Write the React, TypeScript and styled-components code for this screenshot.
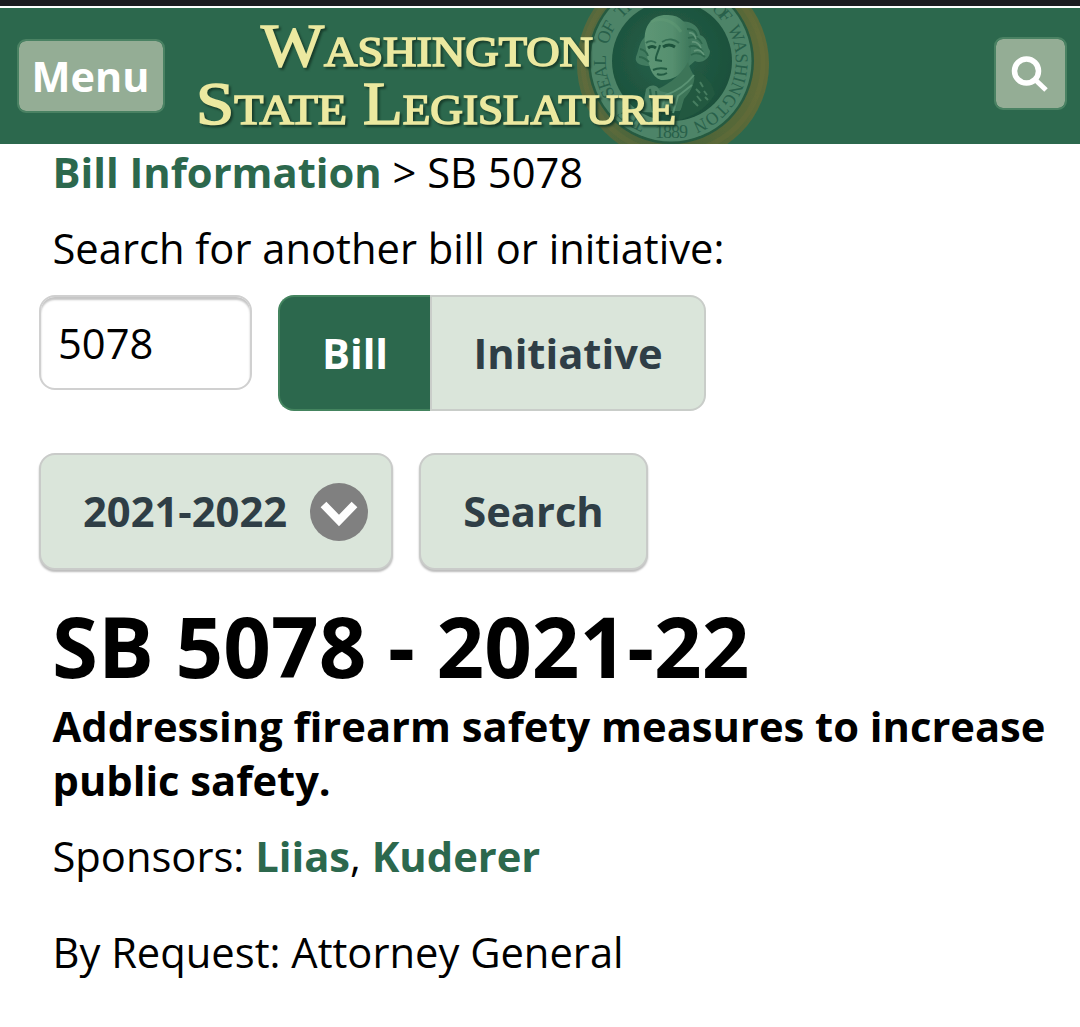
import React from "react";
import styled, { createGlobalStyle } from "styled-components";

const Global = createGlobalStyle`
  * { box-sizing: border-box; }
  body { margin: 0; background: #fff; }
`;

const Page = styled.div`
  height: 1027px;
  overflow: hidden;
  background: #fff;
  color: #000;
  font-family: "Open Sans", "Noto Sans", sans-serif;
  font-size: 41.7px;
  line-height: 54px;
`;

const StatusStrip = styled.div`
  height: 6px;
  background: #1c1b20;
`;

const Header = styled.header`
  display: flex;
  align-items: flex-start;
  height: 136px;
  margin-top: 2px;
  padding: 0 13px 0 17px;
  background: #2c684d;
`;

const HeaderButton = styled.button<{ $w: number; $h: number; $top: number }>`
  display: flex;
  align-items: center;
  justify-content: center;
  width: ${(p) => p.$w}px;
  height: ${(p) => p.$h}px;
  margin: ${(p) => p.$top}px 0 0;
  padding: 0 1px 0 0;
  border: 2px solid #4a8263;
  border-radius: 9px;
  background: #94ad95;
  background-clip: padding-box;
  color: #fff;
  font: 700 41.4px/60px "Open Sans", sans-serif;
`;

const Banner = styled.svg`
  display: block;
  width: 620px;
  height: 136px;
  margin-left: 18px;
  margin-right: auto;
`;

const Wordmark = styled.g`
  filter: drop-shadow(2px 2px 1px #173c2a);
`;

const Main = styled.main`
  padding: 1px 20px 0 39px;
`;

const Line = styled.p<{ $top?: number }>`
  margin: ${(p) => p.$top ?? 0}px 0 0 13.5px;
`;

const Link = styled.a`
  color: #2c684d;
  font-weight: 700;
`;

const Row = styled.div<{ $top: number; $gap: number }>`
  display: flex;
  align-items: flex-start;
  gap: ${(p) => p.$gap}px;
  margin-top: ${(p) => p.$top}px;
`;

const BillInput = styled.input`
  width: 213px;
  height: 95px;
  padding: 0 17px 0;
  border: 2px solid #d0d0d0;
  border-radius: 16px;
  background: #fff;
  box-shadow: inset 0 3px 2px #c6c6c6;
  color: #000;
  font: 400 41.7px "Open Sans", sans-serif;
`;

const Segments = styled.div`
  display: flex;
`;

const Segment = styled.button<{ $active?: boolean }>`
  width: ${(p) => (p.$active ? 152 : 276)}px;
  height: 116px;
  padding: 0 0 2px;
  border: 2px solid ${(p) => (p.$active ? "#44845f" : "#c9cdc9")};
  ${(p) => (p.$active ? "border-right: 0;" : "")}
  border-radius: ${(p) => (p.$active ? "16px 0 0 16px" : "0 16px 16px 0")};
  background: ${(p) => (p.$active ? "#2c684d" : "#dae5da")};
  color: ${(p) => (p.$active ? "#fff" : "#2f3e46")};
  font: 700 41.7px "Open Sans", sans-serif;
`;

const RaisedButton = styled.button<{ $w: number; $select?: boolean }>`
  display: flex;
  align-items: center;
  justify-content: ${(p) => (p.$select ? "space-between" : "center")};
  width: ${(p) => p.$w}px;
  height: 117px;
  padding: ${(p) => (p.$select ? "0 23px 2px 42px" : "0 0 2px")};
  border: 2px solid #c9cbc9;
  border-radius: 16px;
  background: #dae5da;
  box-shadow: 0 2px 2px #bcbcbc;
  color: #2f3e46;
  font: 700 41.7px "Open Sans", sans-serif;
`;

const SelectIcon = styled.svg`
  display: block;
  width: 58px;
  height: 58px;
  margin-top: 2px;
`;

const Title = styled.h1`
  margin: 30px 0 0 13px;
  font-size: 83.4px;
  line-height: 92px;
`;

const Summary = styled.h2`
  margin: 7px 0 0 13.5px;
  font-size: 41.7px;
  line-height: 54px;
`;

const LegislatureBanner = () => (
  <Banner viewBox="183 8 620 136">
    <defs>
      <radialGradient id="disc" cx="45%" cy="45%" r="60%">
        <stop offset="0" stopColor="#28624b" />
        <stop offset="1" stopColor="#1a4f3a" />
      </radialGradient>
      <linearGradient id="gold" x1="0" x2="1">
        <stop offset="0" stopColor="#586a3d" />
        <stop offset="0.5" stopColor="#476239" />
        <stop offset="1" stopColor="#5f6b38" />
      </linearGradient>
      <linearGradient id="face" x1="0" x2="1">
        <stop offset="0" stopColor="#5d9675" />
        <stop offset="0.6" stopColor="#568f6f" />
        <stop offset="1" stopColor="#3d775b" />
      </linearGradient>
      <path id="sealRim" d="M 654.2 123.8 A 65 65 0 1 1 676.7 125.7" />
      <filter id="soft"><feGaussianBlur stdDeviation="0.6" /></filter>
    </defs>
    <g filter="url(#soft)">
      <ellipse cx="673" cy="64" rx="96" ry="97" fill="url(#gold)" />
      <circle cx="673" cy="63" r="90" fill="none" stroke="#71713a" strokeOpacity="0.3" strokeWidth="5" />
      <circle cx="671" cy="61" r="83" fill="#255a40" />
      <circle cx="671" cy="61" r="80.5" fill="#4d8467" />
      <circle cx="672" cy="61" r="60" fill="url(#disc)" />
    </g>
    <g fill="#28604a" fontFamily="Liberation Serif, serif" fontSize="18">
      <text><textPath href="#sealRim" startOffset="8" textLength="28">THE</textPath></text>
      <text><textPath href="#sealRim" startOffset="50" textLength="41">SEAL</textPath></text>
      <text><textPath href="#sealRim" startOffset="101" textLength="22">OF</textPath></text>
      <text><textPath href="#sealRim" startOffset="131" textLength="31">THE</textPath></text>
      <text><textPath href="#sealRim" startOffset="230" textLength="19">OF</textPath></text>
      <text><textPath href="#sealRim" startOffset="255" textLength="114" lengthAdjust="spacingAndGlyphs">WASHINGTON</textPath></text>
      <text x="655" y="138" textLength="33">1889</text>
    </g>
    <g filter="url(#soft)">
      <path d="M645 37C639 42 639 50 636 57C634 64 643 66 649 66L656 45L650 34Z" fill="#437c60" />
      <path d="M680 22C690 20 699 26 700 35C708 38 706 45 710 51C710 60 700 64 695 61L688 67L678 45Z" fill="#437c60" />
      <path d="M645 43C643 25 653 15 666 15C680 14 688 23 690 36C692 48 691 59 687 66C682 75 671 81 661 80C651 77 649 65 647 56Z" fill="url(#face)" />
      <path d="M688 62C691 74 697 76 696 87L680 111L648 111L652 91C665 87 680 77 688 62Z" fill="#3c7559" />
      <path d="M646 89C651 83 658 85 660 91L672 94L666 113L642 112Z" fill="#4b8266" />
      <path d="M694 69C706 74 713 85 715 94C706 109 692 117 678 120L684 99C693 89 696 80 694 69Z" fill="#22583f" />
      <path d="M694 75C687 84 677 91 666 95L659 116M692 85L678 96L673 113" fill="none" stroke="#5a9273" strokeWidth="2" />
      <path d="M646 43C649 40 654 41 656 43M662 42C668 38 675 39 679 43" fill="none" stroke="#326c51" strokeWidth="1.8" />
      <path d="M648 48Q652 45 656 48M663 47Q669 43 675 47" fill="none" stroke="#1d523b" strokeWidth="3" />
      <path d="M660 45C659 51 655 56 656 60L662 61M653 70Q659 67 667 69M657 74Q662 76 667 73" fill="none" stroke="#235b43" strokeWidth="2" />
      <path d="M651 22C659 17 673 19 681 32" fill="none" stroke="#659d79" strokeWidth="3" strokeOpacity="0.4" />
      <path d="M687 29Q696 29 697 36M688 38Q698 35 702 44M689 47Q696 43 703 52M691 55Q698 51 705 57M640 49Q646 50 648 56M639 57Q644 57 649 62" fill="none" stroke="#2d684d" strokeWidth="1.8" />
      <path d="M689 33Q694 32 696 39M692 42Q698 41 701 48M694 51Q700 48 704 55" fill="none" stroke="#63977a" strokeWidth="1.5" />
      <path d="M700 82l3 5m-7 2l4 4m4-2l3 4m-10 1l4 5m4-4l3 3m-15 1l5 5" stroke="#467d60" strokeWidth="2" />
      <path d="M650 89l3 22M656 91l2 20" stroke="#29634a" strokeWidth="2" />
    </g>
    <Wordmark
      fill="#ece9a0"
      fontFamily="Liberation Serif, serif"
      stroke="#ece9a0"
      strokeWidth="1.7"
    >
      <text x="261" y="65.5" textLength="332" lengthAdjust="spacingAndGlyphs" fontSize="62">W<tspan fontSize="43">ASHINGTON</tspan></text>
      <text x="196" y="123.5" textLength="151" lengthAdjust="spacingAndGlyphs" fontSize="62">S<tspan fontSize="43">TATE</tspan></text>
      <text x="363" y="123.5" textLength="313" lengthAdjust="spacingAndGlyphs" fontSize="62">L<tspan fontSize="43">EGISLATURE</tspan></text>
    </Wordmark>
  </Banner>
);

export default function App() {
  return (
    <Page>
      <Global />
      <StatusStrip />
      <Header>
        <HeaderButton $w={148} $h={74} $top={31}>Menu</HeaderButton>
        <LegislatureBanner />
        <HeaderButton $w={73} $h={73} $top={29} aria-label="Search site">
          <svg width="40" height="40" viewBox="0 0 40 40" fill="none" stroke="#fff">
            <circle cx="16.5" cy="17" r="12" strokeWidth="5.5" />
            <path d="M25 25.5L36 36" strokeWidth="5" />
          </svg>
        </HeaderButton>
      </Header>
      <Main>
        <Line><Link>Bill Information</Link> &gt; SB 5078</Line>
        <Line $top={22}>Search for another bill or initiative:</Line>
        <Row $top={20} $gap={26}>
          <BillInput defaultValue="5078" />
          <Segments>
            <Segment $active>Bill</Segment>
            <Segment>Initiative</Segment>
          </Segments>
        </Row>
        <Row $top={42} $gap={26}>
          <RaisedButton $w={354} $select>
            2021-2022
            <SelectIcon viewBox="0 0 58 58">
              <circle cx="29" cy="29" r="29" fill="#808080" />
              <path d="M13.5 21.5L29 37.5L44.5 21.5" fill="none" stroke="#fff" strokeWidth="8" />
            </SelectIcon>
          </RaisedButton>
          <RaisedButton $w={229}>Search</RaisedButton>
        </Row>
        <Title>SB 5078 - 2021-22</Title>
        <Summary>Addressing firearm safety measures to increase public safety.</Summary>
        <Line $top={22}>Sponsors: <Link>Liias</Link>, <Link>Kuderer</Link></Line>
        <Line $top={42}>By Request: Attorney General</Line>
      </Main>
    </Page>
  );
}
